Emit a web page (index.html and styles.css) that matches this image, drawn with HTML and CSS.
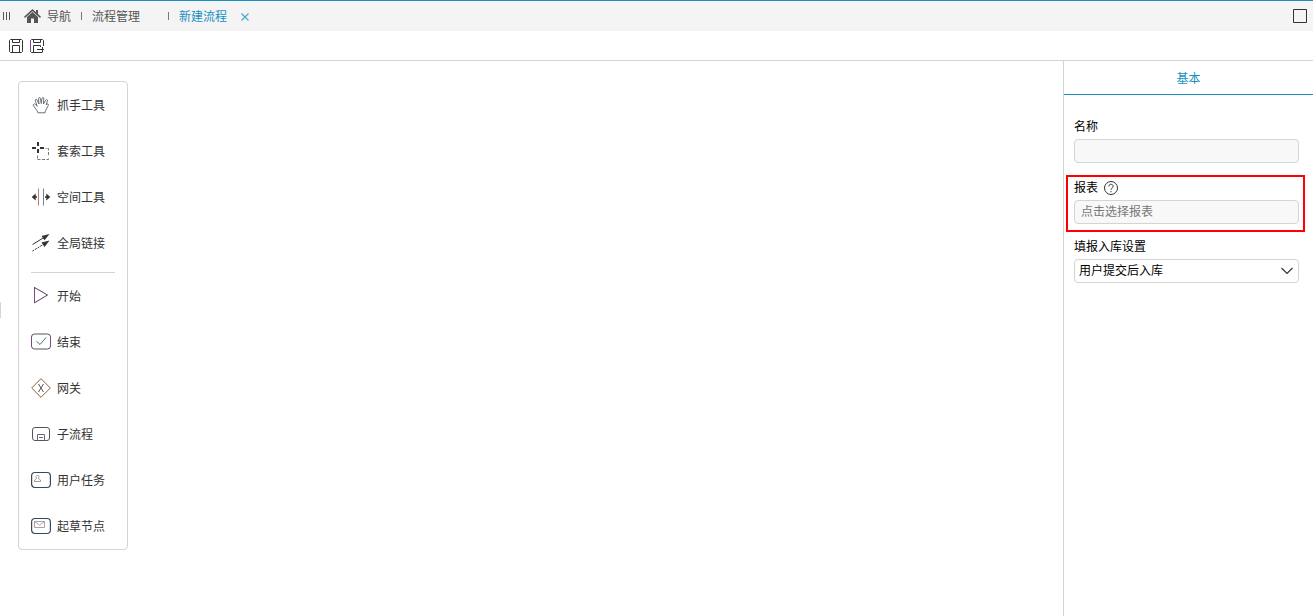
FILE: index.html
```html
<!DOCTYPE html>
<html lang="zh-CN">
<head>
<meta charset="utf-8">
<title>新建流程</title>
<link rel="stylesheet" href="styles.css">
</head>
<body>
<div class="app">
  <header class="tabs">
    <button class="icon-button menu-button" aria-label="菜单"><svg width="9" height="8" viewBox="0 0 9 8" stroke="#555"><path d="M1.5 0v8M4.500 0v8M7.500 0v8"/></svg></button>
    <a class="tab home" href="#"><svg width="17" height="14" viewBox="0 0 17 14" fill="#555"><path d="M8.500 0 L12 3.200 V1 H14 V5 L17 7.800 L16 9 L8.500 2.300 L1 9 L0 7.800Z"/><path d="M8.500 3 L14 8 V14 H10 V9.500 H7 V14 H3 V8Z"/></svg><span class="caption">导航</span></a>
    <span class="separator"></span>
    <a class="tab manage" href="#"><span class="caption">流程管理</span></a>
    <span class="separator"></span>
    <a class="tab current" href="#"><span class="caption">新建流程</span></a>
    <button class="icon-button close" aria-label="关闭"><svg width="8" height="8" viewBox="0 0 8 8" stroke="#4aa8cf" stroke-width="1.200"><path d="M.5 .5l7 7M7.500 .5l-7 7"/></svg></button>
    <button class="icon-button maximize" aria-label="最大化"><svg width="14" height="14" viewBox="0 0 14 14" fill="none" stroke="#333"><path d="M.5 .5h13v13H.5z"/></svg></button>
  </header>
  <div class="toolbar">
    <button class="icon-button" aria-label="保存"><svg width="14" height="14" viewBox="0 0 14 14" fill="none" stroke="#333"><path d="M1.500 .5h11l1 1v11l-1 1h-11l-1-1v-11zM3.500 .5v3h7v-3M3.500 13.500v-7h7v7"/></svg></button>
    <button class="icon-button" aria-label="另存为"><svg width="15" height="14" viewBox="0 0 15 14" fill="none" stroke="#333"><path d="M13.500 7V1.500l-1-1h-11l-1 1v11l1 1h11M3.500 .5v3h7v-3M3.500 13.500v-7h7v1.500M7 10.500h7M12.500 8v5"/><path stroke="#85418f" d="M.5 1.500v11"/></svg></button>
  </div>
  <div class="workspace">
    <main class="canvas">
      <button class="drawer-handle" aria-label="展开"></button>
      <nav class="palette" aria-label="流程工具">
        <button class="tool"><svg width="20" height="20" viewBox="0 0 20 20" fill="none" stroke="#56616e" stroke-width=".9"><path d="M7 17.800 C6 15 3.500 12.500 2.300 10.500 C2 9 3.500 8.300 4.500 9.500 L6.200 11.300 L4.300 5.700 C4 4.200 5.600 3.700 6.200 5.200 L8 9 L7.500 3.700 C7.500 2.200 9.200 2.200 9.500 3.700 L10.200 8.500 L11 3.300 C11.300 2 13 2.300 12.800 3.700 L12.400 9 L14.700 5.200 C15.500 4 17 4.800 16.400 6 L15.200 10 C16 8.500 18 8.700 17.300 10.300 L15.200 14.500 C14.500 15.800 14 16.500 14 17.800z"/></svg><span class="caption">抓手工具</span></button>
        <button class="tool"><svg width="20" height="20" viewBox="0 0 20 20" fill="none" stroke="#333"><path stroke-width="2" d="M7 1v4M7 8v4M1 7h4M9 7h4"/><path d="M6.500 14.500v4h3M11 18.500h3M15.500 18.500h2v-2M17.500 14v-3M17.500 9.500v-2h-3" stroke="#777" stroke-dasharray="3 1"/></svg><span class="caption">套索工具</span></button>
        <button class="tool"><svg width="20" height="20" viewBox="0 0 20 20" fill="none"><path stroke="#c07878" d="M7.500 1.500v17"/><path stroke="#777d9a" d="M12.500 1.500v17"/><path stroke="#333" stroke-width="1.500" d="M3 10h3M14 10h3"/><path fill="#333" d="M.7 10l4-3.500v7zM19.300 10l-4-3.500v7z"/></svg><span class="caption">空间工具</span></button>
        <button class="tool"><svg width="20" height="20" viewBox="0 0 20 20" fill="none" stroke="#333"><path d="M1.500 11.500L13 4.500"/><path stroke-dasharray="2 1" d="M1.500 18L13 11"/><path fill="#333" stroke="none" d="M18.500 1l-8 2 3 4.200zM18.500 7.500l-8 2 3 4.500z"/></svg><span class="caption">全局链接</span></button>
        <hr class="divider">
        <button class="tool"><svg width="20" height="20" viewBox="0 0 20 20" fill="none" stroke="#4d4152"><path stroke="#85418f" d="M3.500 1v16"/><path d="M3.500 1.500L16.500 9L3.500 16.800"/></svg><span class="caption">开始</span></button>
        <button class="tool"><svg width="20" height="20" viewBox="0 0 20 20" fill="none"><rect x=".5" y="2" width="19" height="15" rx="3" stroke="#555"/><path stroke="#85418f" d="M.5 5v9M19.500 5v9"/><path stroke="#397d55" d="M5.500 9.300L9 12.500L15 5.500"/></svg><span class="caption">结束</span></button>
        <button class="tool"><svg width="20" height="20" viewBox="0 0 20 20" fill="none" stroke="#8a6238"><path d="M10 .7L19.300 10L10 19.300L.7 10z"/><path stroke="#555" d="M7.500 6l5 8M12.500 6l-5 8"/></svg><span class="caption">网关</span></button>
        <button class="tool"><svg width="20" height="20" viewBox="0 0 20 20" fill="none" stroke="#555"><rect x="1.500" y="3.500" width="17" height="13" rx="2.500"/><path stroke="#668" d="M6.500 16.500v-6h7v6M8 13.500h4"/></svg><span class="caption">子流程</span></button>
        <button class="tool"><svg width="20" height="20" viewBox="0 0 20 20" fill="none" stroke="#35495c"><rect x=".6" y="2.500" width="18.800" height="15" rx="3.500" stroke-width="1.200"/><path stroke="#888" stroke-width=".8" d="M6.500 5.500a1.400 1.400 0 0 1 .7 2.700L9.500 10v1.500h-6V10l2.300-1.800a1.400 1.400 0 0 1 .7-2.700"/></svg><span class="caption">用户任务</span></button>
        <button class="tool"><svg width="20" height="20" viewBox="0 0 20 20" fill="none" stroke="#35495c"><rect x=".6" y="2.500" width="18.800" height="15" rx="3.500" stroke-width="1.200"/><path stroke="#998a92" stroke-width=".8" d="M3.500 5.500h10v6h-10zv0L8.500 9l5-3.500"/></svg><span class="caption">起草节点</span></button>
      </nav>
    </main>
    <aside class="inspector">
      <div class="inspector-tabs" role="tablist"><button class="inspector-tab" role="tab" aria-selected="true"><span class="caption">基本</span></button></div>
      <form class="fields">
        <div class="field">
          <label class="label" for="name">名称</label>
          <input class="control" id="name" type="text">
        </div>
        <div class="field highlighted">
          <div class="label-row"><label class="label" for="report">报表</label><button class="icon-button" type="button" aria-label="帮助"><svg width="14" height="14" viewBox="0 0 14 14" fill="none" stroke="#333"><circle cx="7" cy="7" r="6.500"/><path d="M4.800 5.500C4.800 2.600 9.200 2.600 9.200 5.300C9.200 7 7 7 7 8.800M7 10v1.200"/></svg></button></div>
          <input class="control picker" id="report" type="text" placeholder="点击选择报表">
        </div>
        <div class="field">
          <label class="label" for="storage">填报入库设置</label>
          <div class="select-wrap">
            <select class="control select" id="storage"><option>用户提交后入库</option></select>
            <svg class="chevron" width="12" height="8" viewBox="0 0 12 8" fill="none" stroke="#333" stroke-width="1.200"><path d="M.5 1L6 6.500L11.500 1"/></svg>
          </div>
        </div>
      </form>
    </aside>
  </div>
</div>
</body>
</html>
```

FILE: styles.css
```css
* {
  box-sizing: border-box;
}

body {
  margin: 0;
  font: 12px/20px "Liberation Sans", "Noto Sans CJK SC", sans-serif;
  color: #000;
  background: #fff;
}

button,
input,
select {
  font: inherit;
  color: inherit;
}

svg {
  display: block;
  flex: none;
}

.app {
  display: flex;
  flex-direction: column;
  min-height: 100vh;
}

.icon-button {
  padding: 0;
  border: 0;
  background: none;
}

.caption {
  display: block;
  padding-top: 2px;
}

.tabs {
  display: flex;
  align-items: center;
  height: 31px;
  padding: 0 6px 0 2px;
  border-top: 1px solid #1890c0;
  background: #f4f4f4;
}

.tab {
  color: #555;
  text-decoration: none;
}

.home {
  display: flex;
  align-items: center;
  gap: 6px;
  margin: 0 10px 0 13px;
}

.separator {
  width: 1px;
  height: 8px;
  background: #777;
}

.manage {
  margin: 0 28px 0 10px;
}

.current {
  margin: 0 14px 0 10px;
  color: #1890c0;
}

.close {
  padding-top: 2px;
}

.maximize {
  margin-left: auto;
}

.toolbar {
  display: flex;
  align-items: center;
  gap: 7px;
  height: 30px;
  padding: 0 9px;
  border-bottom: 1px solid #d4d4d4;
}

.workspace {
  display: flex;
  flex: 1;
}

.canvas {
  position: relative;
  flex: 1;
  padding: 20px 18px;
}

.drawer-handle {
  position: absolute;
  top: 241px;
  left: 0;
  width: 1px;
  height: 16px;
  padding: 0;
  border: 0;
  background: #d4d4d4;
}

.palette {
  display: flex;
  flex-direction: column;
  width: 110px;
  padding: 0 12px;
  border: 1px solid #d4d4d4;
  border-radius: 4px;
}

.tool {
  display: flex;
  align-items: center;
  gap: 6px;
  height: 46px;
  padding: 0;
  border: 0;
  background: none;
  color: #333;
  white-space: nowrap;
}

.divider {
  width: 100%;
  height: 1px;
  margin: 6px 0 0;
  border: 0;
  background: #d4d4d4;
}

.inspector {
  width: 250px;
  border-left: 1px solid #d4d4d4;
}

.inspector-tabs {
  display: flex;
}

.inspector-tab {
  flex: 1;
  height: 34px;
  padding: 0;
  border: 0;
  border-bottom: 1px solid #1890c0;
  background: none;
  color: #1890c0;
}

.fields {
  padding: 22px 8px 0 2px;
}

.field {
  padding: 0 6px 0 8px;
}

.highlighted {
  margin: 12px 0 5px;
  padding: 1px 4px 6px 6px;
  border: 2px solid #f00;
}

.label {
  display: block;
}

.label-row {
  display: flex;
  align-items: center;
  gap: 6px;
}

.control {
  display: block;
  width: 100%;
  height: 24px;
  margin: 2px 0 0;
  padding: 0 6px;
  border: 1px solid #d4d4d4;
  border-radius: 4px;
  background: #f8f8f8;
}

.picker::placeholder {
  color: #777;
}

.select-wrap {
  position: relative;
}

.select {
  padding: 0 20px 0 4px;
  background: #fff;
  appearance: none;
}

.chevron {
  position: absolute;
  top: 8px;
  right: 6px;
  pointer-events: none;
}
```
